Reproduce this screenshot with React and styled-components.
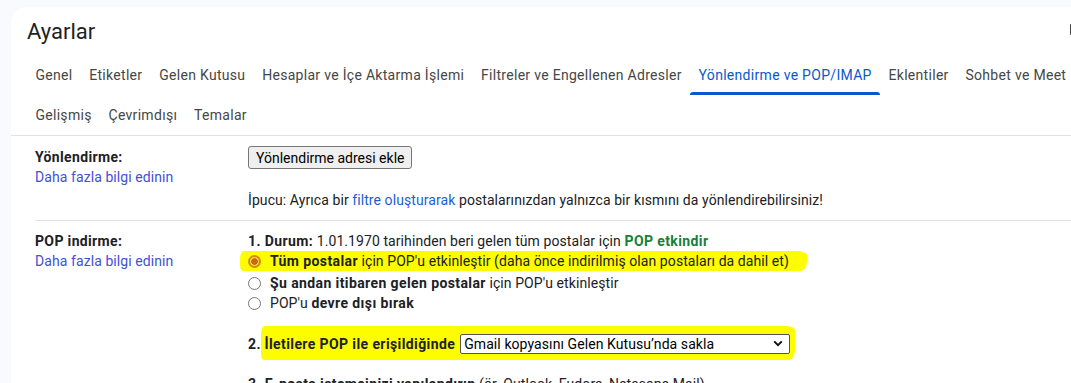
import styled, { createGlobalStyle } from "styled-components";

const GlobalStyle = createGlobalStyle`
  html, body {
    margin: 0;
    padding: 0;
    background: #f8fafd;
    overflow: hidden;
  }
  body {
    font-family: Roboto, "Liberation Sans", Arial, sans-serif;
    color: #1f1f1f;
  }
`;

const Page = styled.div`
  padding: 7px 0 0 11px;
  height: 383px;
  box-sizing: border-box;
`;

const Panel = styled.main`
  width: 1090px;
  height: 100%;
  background: #fff;
  border-top-left-radius: 16px;
  overflow: hidden;
`;

const TitleRow = styled.div`
  display: flex;
  align-items: center;
  justify-content: space-between;
  height: 48px;
  padding: 0 19px 0 16px;
`;

const Title = styled.h1`
  margin: 0;
  font-size: 22px;
  font-weight: 400;
  color: #1f1f1f;
`;

const ToolIcon = styled.div`
  flex: none;
  width: 12px;
  height: 11px;
  margin-bottom: 4px;
  background: #444746;
  border-radius: 1px;
`;

const Tabs = styled.nav`
  padding-left: 16px;
  border-bottom: 1px solid #e1e3e1;
`;

const TabRow = styled.div`
  display: flex;
  height: 40px;
  white-space: nowrap;
`;

const Tab = styled.a`
  position: relative;
  display: flex;
  align-items: center;
  padding: 0 8.4px;
  font-size: 14px;
  letter-spacing: 0.3px;
  color: ${(p) => (p.$active ? "#0b57d0" : "#444746")};
  cursor: pointer;

  &::after {
    content: "";
    display: ${(p) => (p.$active ? "block" : "none")};
    position: absolute;
    left: 0;
    right: 0;
    bottom: 0;
    height: 3px;
    border-radius: 3px 3px 0 0;
    background: #0b57d0;
  }
`;

const Table = styled.section`
  margin-left: 24px;
  font-size: 14px;
  line-height: 20px;
  letter-spacing: 0.08px;
  color: #202124;
`;

const SettingRow = styled.div`
  display: grid;
  grid-template-columns: 213px 1fr;
  padding: 10px 0;
  border-bottom: ${(p) => (p.$last ? "none" : "1px solid #e1e3e1")};
`;

const LabelCell = styled.div`
  display: flex;
  flex-direction: column;
  padding-top: ${(p) => p.$offset || 0}px;
`;

const Label = styled.span`
  font-weight: 700;
  letter-spacing: 0.35px;
`;

const Link = styled.a`
  color: ${(p) => p.$tone || "#3f51d4"};
  text-decoration: none;
  cursor: pointer;
`;

const ValueCell = styled.div`
  display: flex;
  flex-direction: column;
  align-items: flex-start;
`;

const Button = styled.button`
  height: 23px;
  padding: 0 7px;
  font-family: Roboto, "Liberation Sans", Arial, sans-serif;
  font-size: 14px;
  color: #000;
  background: #efefef;
  border: 1px solid #767676;
  border-radius: 3px;
`;

const Line = styled.div`
  margin-top: ${(p) => p.$gap || 0}px;
  white-space: nowrap;
`;

const Strong = styled.b`
  font-weight: 700;
  letter-spacing: 0.4px;
  color: ${(p) => p.$tone || "inherit"};
`;

const Highlight = styled.span`
  display: inline-flex;
  align-items: center;
  background: #fdfd00;
  padding: ${(p) => p.$pad};
  margin: ${(p) => p.$margin};
  border-radius: 4px 10px 6px 3px / 8px 4px 10px 6px;
`;

const Radio = styled.span`
  display: inline-block;
  flex: none;
  box-sizing: border-box;
  width: 13px;
  height: 13px;
  margin-right: 9px;
  border-radius: 50%;
  vertical-align: -2px;
  border: ${(p) => (p.$checked ? "2px solid #d98a00" : "1px solid #767676")};
  background: ${(p) =>
    p.$checked
      ? "radial-gradient(circle, #c66f00 0 3px, #f3d46a 3.6px)"
      : "#fff"};
`;

const Select = styled.div`
  display: inline-flex;
  align-items: center;
  justify-content: space-between;
  box-sizing: border-box;
  width: 330px;
  height: 20px;
  margin-left: 5px;
  padding: 0 6px 0 3px;
  font-size: 14px;
  font-weight: 400;
  color: #000;
  background: #fff;
  border: 1px solid #555;
  border-radius: 2px;
`;

const Chevron = () => (
  <svg width="10" height="7" viewBox="0 0 10 7">
    <path d="M1.2 1.4 5 5.2 8.8 1.4" fill="none" stroke="#111" strokeWidth="2" />
  </svg>
);

const firstTabs = [
  "Genel",
  "Etiketler",
  "Gelen Kutusu",
  "Hesaplar ve İçe Aktarma İşlemi",
  "Filtreler ve Engellenen Adresler",
  "Yönlendirme ve POP/IMAP",
  "Eklentiler",
  "Sohbet ve Meet",
];
const secondTabs = ["Gelişmiş", "Çevrimdışı", "Temalar"];

export default function App() {
  return (
    <Page>
      <GlobalStyle />
      <Panel>
        <TitleRow>
          <Title>Ayarlar</Title>
          <ToolIcon />
        </TitleRow>
        <Tabs>
          <TabRow>
            {firstTabs.map((t) => (
              <Tab key={t} $active={t === "Yönlendirme ve POP/IMAP"}>
                {t}
              </Tab>
            ))}
          </TabRow>
          <TabRow>
            {secondTabs.map((t) => (
              <Tab key={t}>{t}</Tab>
            ))}
          </TabRow>
        </Tabs>
        <Table>
          <SettingRow>
            <LabelCell $offset={1}>
              <Label>Yönlendirme:</Label>
              <Link>Daha fazla bilgi edinin</Link>
            </LabelCell>
            <ValueCell>
              <Button>Yönlendirme adresi ekle</Button>
              <Line $gap={21}>
                İpucu: Ayrıca bir <Link $tone="#1a5fd6">filtre oluşturarak</Link>{" "}
                postalarınızdan yalnızca bir kısmını da yönlendirebilirsiniz!
              </Line>
            </ValueCell>
          </SettingRow>
          <SettingRow $last>
            <LabelCell>
              <Label>POP indirme:</Label>
              <Link>Daha fazla bilgi edinin</Link>
            </LabelCell>
            <ValueCell>
              <Line>
                <Strong>1. Durum:</Strong> 1.01.1970 tarihinden beri gelen tüm
                postalar için <Strong $tone="#188038">POP etkindir</Strong>
              </Line>
              <Line>
                <Highlight $pad="0 18px 0 8px" $margin="0 -18px 0 -8px">
                  <Radio $checked />
                  <span>
                    <Strong>Tüm postalar</Strong>&nbsp;için POP'u etkinleştir
                    (daha önce indirilmiş olan postaları da dahil et)
                  </span>
                </Highlight>
              </Line>
              <Line>
                <Radio />
                <Strong>Şu andan itibaren gelen postalar</Strong> için POP'u
                etkinleştir
              </Line>
              <Line>
                <Radio />
                POP'u <Strong>devre dışı bırak</Strong>
              </Line>
              <Line $gap={21}>
                <Strong>2.</Strong>&nbsp;
                <Highlight $pad="8px 5px 6px 3px" $margin="-8px -5px -6px -3px">
                  <Strong>İletilere POP ile erişildiğinde</Strong>
                  <Select>
                    <span>Gmail kopyasını Gelen Kutusu’nda sakla</span>
                    <Chevron />
                  </Select>
                </Highlight>
              </Line>
              <Line $gap={20}>
                <Strong>3. E-posta istemcinizi yapılandırın</Strong> (ör.
                Outlook, Eudora, Netscape Mail)
              </Line>
            </ValueCell>
          </SettingRow>
        </Table>
      </Panel>
    </Page>
  );
}
